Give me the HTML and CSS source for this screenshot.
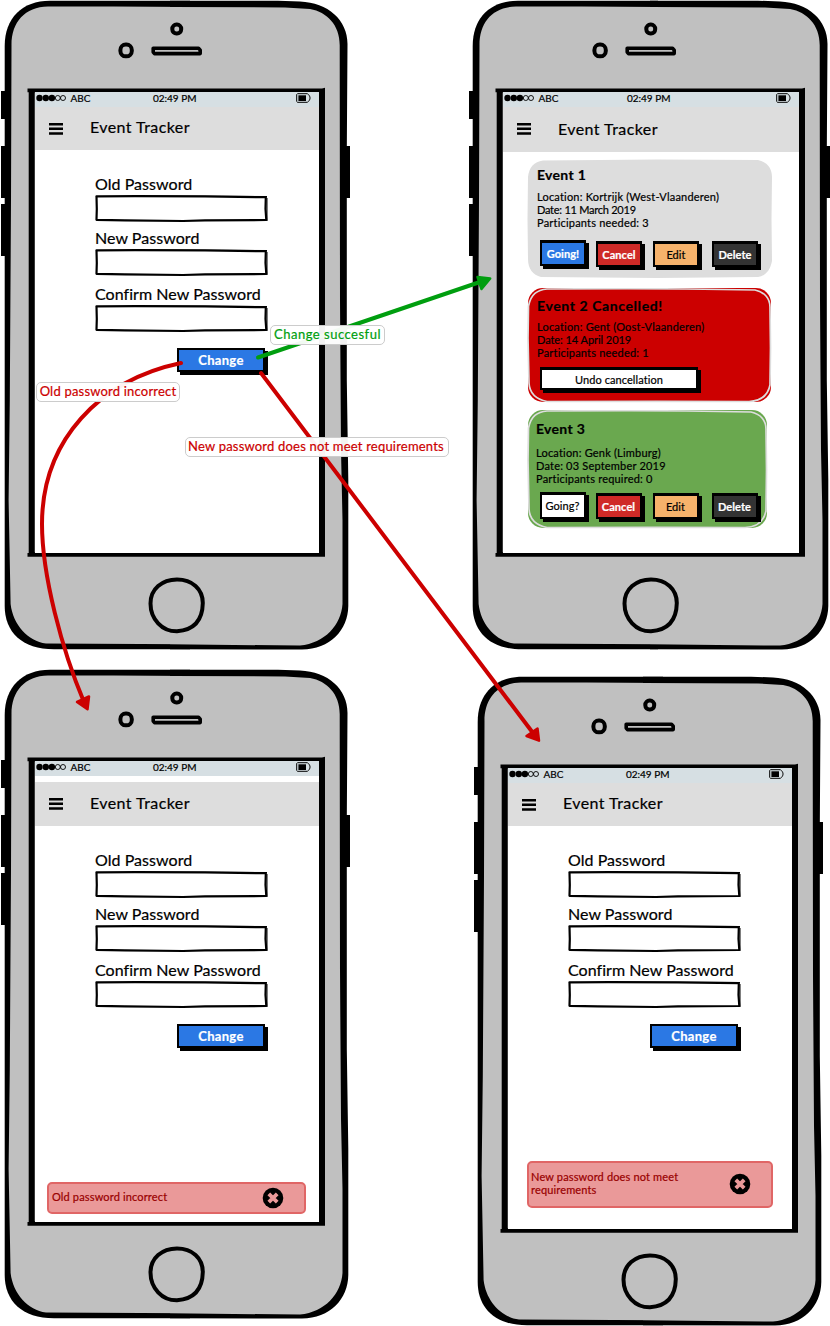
FILE: index.html
```html
<!DOCTYPE html>
<html lang="en">
<head>
<meta charset="utf-8">
<title>Event Tracker – change password flow</title>
<link rel="stylesheet" href="styles.css">
</head>
<body>
<svg class="defs" aria-hidden="true">
  <symbol id="frame-left" viewBox="0 0 190 650">
    <path d="M1 91h6v28H1zM1 146h6v52H1zM1 204h6v52H1z"/>
    <path d="M190 .7H50C22 .7 4.7 18 4.7 46V606C4.7 632 22 649.3 54 649.3H190Z"/>
    <path fill="#c0c0c0" d="M190 7L113 6.5H48C25 7 11.5 22 11.5 45L11 200 9.8 400 8.6 500 10.6 604C13 625 28 641 46 643.6L190 644.3Z"/>
    <path d="M190 92.5H34.7V552.3H190V556.7H27.5V553H28.7V92.3H27.5V88.5H190Z"/>
  </symbol>
  <symbol id="frame-right" viewBox="170 0 180 650">
    <path d="M345 146h5v52h-5z"/>
    <path d="M170 .7H278L300 1.5C328 2.500 347.500 20 347.500 44L346.800 150V380L348.300 480V606C348 630 330 649.500 302 649.500L170 649.300Z"/>
    <path fill="#c0c0c0" d="M170 7L285 7.500 310 9C327 12 339.700 25 339.700 45L340 300 341 450 342.500 520V604C341 625 325 643 300 645.600L170 644.200Z"/>
    <path d="M170 88.500H322L325 87.700V556.700H170V552.300H318.500V92.500H170Z"/>
  </symbol>
  <symbol id="frame-mid" viewBox="100 0 120 650">
    <g fill="none" stroke="#000">
      <rect x="172.300" y="24.600" width="8.900" height="8.900" rx="4.200" stroke-width="4"/>
      <rect x="120.400" y="44.500" width="11.400" height="11.800" rx="5.400" stroke-width="4"/>
      <path stroke-width="3.600" stroke-linejoin="round" d="M153.200 48.200H198.500L200.200 50.200V53.600H154.500L153.200 52Z"/>
      <path stroke-width="4" d="M177 579.500C192 579.500 202.800 589 202.800 603C202.500 620 194 630 177 631.300C162 631.500 150.500 619 150.500 603.500C150.500 589 162 579.500 177 579.500Z"/>
    </g>
  </symbol>
  <symbol id="signal" viewBox="0 0 30 8">
    <circle cx="3.500" cy="4" r="3.200"/><circle cx="9.800" cy="4" r="3.200"/><circle cx="15.900" cy="4" r="3.200"/>
    <g fill="none" stroke="#000" stroke-width=".9"><circle cx="21.800" cy="4" r="2.500"/><circle cx="27" cy="4" r="2.500"/></g>
  </symbol>
  <symbol id="battery" viewBox="0 0 15 10">
    <path fill="none" stroke="#000" d="M1.500.7H11.500L12.300 1.500C14.600 3.500 14.600 6.500 12.300 8.500L11.500 9.300H1.500L.7 8.500V1.500Z"/>
    <path d="M2.400 2.300H10V8H2.400Z"/>
  </symbol>
  <symbol id="burger" viewBox="0 0 14 12">
    <path d="M0 0h14v2.500H0zM0 4.600h14v2.500H0zM0 9.200h14v2.500H0z"/>
  </symbol>
  <symbol id="box" viewBox="0 0 173 28">
    <path fill="#fff" stroke="#000" stroke-width="2.200" stroke-linejoin="round" d="M1.500 1.500L40 1.100 110 1.300 170.800 2.200 170.500 14 171.300 25 110 25.400 88 26 30 25.300 1.500 24.800 1.800 14Z"/>
    <path fill="none" stroke="#000" d="M.7 1L172 1.500M172 3V26"/>
  </symbol>
  <symbol id="close" viewBox="0 0 22 22">
    <circle cx="11" cy="11" r="10.300"/>
    <path fill="none" stroke="#ea9999" stroke-width="3.800" d="M6.800 6.800L15.200 15.200M15.200 6.800L6.800 15.200"/>
  </symbol>
</svg>

<main class="board">
  <section class="phone phone-change">
    <div class="frame"><svg class="fl"><use href="#frame-left"/></svg><svg class="fr"><use href="#frame-right"/></svg><svg class="fm"><use href="#frame-mid"/></svg></div>
    <div class="screen">
      <div class="status"><svg class="signal"><use href="#signal"/></svg><span class="carrier">ABC</span><span class="time">02:49 PM</span><svg class="battery"><use href="#battery"/></svg></div>
      <header class="bar"><svg class="burger"><use href="#burger"/></svg><h1 class="title">Event Tracker</h1></header>
      <form class="form">
        <div class="field"><label>Old Password</label><svg class="box"><use href="#box"/></svg></div>
        <div class="field"><label>New Password</label><svg class="box"><use href="#box"/></svg></div>
        <div class="field last"><label>Confirm New Password</label><svg class="box"><use href="#box"/></svg></div>
        <span class="btn change blue">Change</span>
      </form>
    </div>
  </section>

  <section class="phone wide phone-events">
    <div class="frame"><svg class="fl"><use href="#frame-left"/></svg><svg class="fr"><use href="#frame-right"/></svg><svg class="fm"><use href="#frame-mid"/></svg></div>
    <div class="screen">
      <div class="status"><svg class="signal"><use href="#signal"/></svg><span class="carrier">ABC</span><span class="time">02:49 PM</span><svg class="battery"><use href="#battery"/></svg></div>
      <header class="bar"><svg class="burger"><use href="#burger"/></svg><h1 class="title">Event Tracker</h1></header>
      <div class="cards">
        <article class="card card-open">
          <svg class="card-bg" viewBox="0 0 246 120"><path fill="#ddd" d="M16 1.500L130 .5 231 1C240 3 245 9 245 18L244.500 60 245 102C243 112 238 117 231 118L130 119 14 118C6 116 1 110 1 100L.5 60 1 18C2 8 7 3 16 1.500Z"/></svg>
          <h2>Event 1</h2>
          <p><span>Location: Kortrijk (West-Vlaanderen)</span><span class="tight">Date: 11 March 2019</span><span>Participants needed: 3</span></p>
          <div class="actions"><span class="btn blue">Going!</span><span class="btn red">Cancel</span><span class="btn orange">Edit</span><span class="btn dark">Delete</span></div>
        </article>
        <article class="card card-cancelled">
          <svg class="card-bg" viewBox="0 0 246 120"><rect x="1" y="0" width="243" height="114" rx="15" fill="#c00"/><path fill="none" stroke="#ddd" stroke-width="1.700" d="M20 1L100 .6 160 1 228 2C238 4 243 11 243 19L243.500 60 243 97C241 107 234 113 222 113.500L130 113.300 20 113.500C8 111 2.500 105 2 95L1 50 1.500 18C4 6 10 2 20 1Z"/></svg>
          <h2>Event 2 Cancelled!</h2>
          <p><span>Location: Gent (Oost-Vlaanderen)</span><span class="plain">Date: 14 April 2019</span><span>Participants needed: 1</span></p>
          <div class="actions"><span class="btn white undo">Undo cancellation</span></div>
        </article>
        <article class="card card-full">
          <svg class="card-bg" viewBox="0 0 246 120"><rect x="1" y="0" width="239" height="118" rx="15" fill="#6aa84f"/><path fill="none" stroke="#ddd" stroke-width="1.700" d="M20 1L100 .6 160 1 224 2C234 4 239 11 239 19L239.500 60 239 101C237 111 230 117 218 117.500L130 117.300 20 117.500C8 115 2.500 109 2 99L1 50 1.500 18C4 6 10 2 20 1Z"/></svg>
          <h2>Event 3</h2>
          <p><span>Location: Genk (Limburg)</span><span>Date: 03 September 2019</span><span>Participants required: 0</span></p>
          <div class="actions"><span class="btn white">Going?</span><span class="btn red">Cancel</span><span class="btn orange">Edit</span><span class="btn dark">Delete</span></div>
        </article>
      </div>
    </div>
  </section>

  <section class="phone phone-old-error">
    <div class="frame"><svg class="fl"><use href="#frame-left"/></svg><svg class="fr"><use href="#frame-right"/></svg><svg class="fm"><use href="#frame-mid"/></svg></div>
    <div class="screen">
      <div class="status"><svg class="signal"><use href="#signal"/></svg><span class="carrier">ABC</span><span class="time">02:49 PM</span><svg class="battery"><use href="#battery"/></svg></div>
      <header class="bar"><svg class="burger"><use href="#burger"/></svg><h1 class="title">Event Tracker</h1></header>
      <form class="form">
        <div class="field"><label>Old Password</label><svg class="box"><use href="#box"/></svg></div>
        <div class="field"><label>New Password</label><svg class="box"><use href="#box"/></svg></div>
        <div class="field last"><label>Confirm New Password</label><svg class="box"><use href="#box"/></svg></div>
        <span class="btn change blue">Change</span>
      </form>
      <div class="alert"><span class="msg">Old password incorrect</span><svg class="close"><use href="#close"/></svg></div>
    </div>
  </section>

  <section class="phone phone-new-error">
    <div class="frame"><svg class="fl"><use href="#frame-left"/></svg><svg class="fr"><use href="#frame-right"/></svg><svg class="fm"><use href="#frame-mid"/></svg></div>
    <div class="screen">
      <div class="status"><svg class="signal"><use href="#signal"/></svg><span class="carrier">ABC</span><span class="time">02:49 PM</span><svg class="battery"><use href="#battery"/></svg></div>
      <header class="bar"><svg class="burger"><use href="#burger"/></svg><h1 class="title">Event Tracker</h1></header>
      <form class="form">
        <div class="field"><label>Old Password</label><svg class="box"><use href="#box"/></svg></div>
        <div class="field"><label>New Password</label><svg class="box"><use href="#box"/></svg></div>
        <div class="field last"><label>Confirm New Password</label><svg class="box"><use href="#box"/></svg></div>
        <span class="btn change blue">Change</span>
      </form>
      <div class="alert tall"><span class="msg">New password does not meet<br>requirements</span><svg class="close"><use href="#close"/></svg></div>
    </div>
  </section>

  <svg class="arrows" viewBox="0 0 830 1326">
    <g fill="none" stroke-width="4" stroke-linecap="round">
      <path stroke="#009e0f" d="M258 357.500L480 282"/>
      <path stroke="#c00" d="M181 363C100 380 42 440 42 524C42 575 62 650 84 702"/>
      <path stroke="#c00" d="M261 373L533 733"/>
    </g>
    <g stroke-width="2.500" stroke-linejoin="round">
      <path fill="#009e0f" stroke="#009e0f" d="M477.500 277L490.200 278.500 481.500 289Z"/>
      <path fill="#c00" stroke="#c00" d="M77 702L89 696.500 87.500 709.300Z"/>
      <path fill="#c00" stroke="#c00" d="M526.500 736L537.500 728.500 539 740.700Z"/>
    </g>
  </svg>
  <span class="tag tag-ok">Change succesful</span>
  <span class="tag tag-old">Old password incorrect</span>
  <span class="tag tag-new">New password does not meet requirements</span>
</main>
</body>
</html>
```
FILE: styles.css
```css
* { box-sizing: border-box; }
body { margin: 0; background: #fff; color: #000; font-family: Lato, "Open Sans", sans-serif; font-variant-ligatures: none; -webkit-text-stroke: .2px; }
svg { display: block; flex: none; }
.defs { position: absolute; width: 0; height: 0; }
.board { position: relative; width: 830px; height: 1326px; overflow: hidden; }

/* Phones sit freely on the board */
.phone { position: absolute; width: 350px; height: 650px; padding: 92px 31px 0 35px; }
.phone.wide { width: 362px; }
.phone-change { left: 0; top: 0; }
.phone-events { left: 468px; top: 0; }
.phone-old-error { left: 0; top: 669px; }
.phone-new-error { left: 473px; top: 676px; }

.frame { position: absolute; inset: 0; }
.frame svg { position: absolute; top: 0; height: 650px; }
.fl { left: 0; width: 190px; }
.fr { right: 0; width: 180px; }
.fm { left: 100px; width: 120px; }
.wide .fm { left: 106px; }

.screen { position: relative; display: flex; flex-direction: column; height: 461px; background: #fff; }
.status { display: flex; align-items: center; height: 15px; padding: 0 8px 3px 1px; background: #d6dfe3; font-size: 10px; line-height: 12px; }
.carrier, .time { margin-bottom: 1px; }
.signal { width: 30px; height: 8px; margin-right: 4.500px; }
.time { margin-left: 62.500px; }
.wide .time { margin-left: 68.500px; }
.battery { width: 15px; height: 10px; margin-left: auto; }

.bar { display: flex; height: 43px; padding: 10px 0 0 14px; background: #ddd; }
.burger { width: 14px; height: 12px; margin: 6px 27px 0 0; }
.title { margin: 0; font-size: 16px; font-weight: 400; line-height: 20px; letter-spacing: .42px; }
.wide .bar { height: 45px; }
.wide .title { margin-top: 2px; }
.phone-old-error .bar { margin-top: 6px; height: 44px; padding-top: 11px; }
.phone-old-error .burger { margin-top: 5px; }

.form { display: flex; flex-direction: column; gap: 6px; width: 234px; padding: 24px 0 0 60px; }
label { display: block; height: 21px; font-size: 16px; line-height: 20px; white-space: nowrap; letter-spacing: .05px; }
.box { width: 173px; height: 28px; margin-bottom: -1px; }
.field.last { margin-top: 2px; }

.btn { display: flex; align-items: center; justify-content: center; height: 26px; border: 2px solid #000; border-width: 3px 2px 2px; box-shadow: 3px 3px 0 #000; font-size: 11px; line-height: 13px; letter-spacing: .07px; white-space: nowrap; }
.blue { background: #2b78e4; color: #fff; font-weight: 700; }
.red { background: #cf2a27; color: #fff; font-weight: 700; }
.orange { background: #f6b26b; }
.dark { background: #333; color: #fff; font-weight: 700; }
.white { background: #fff; }
.change { align-self: flex-end; width: 88px; height: 24px; margin: 10px 4px 0 0; border-width: 2px; font-size: 13px; letter-spacing: .3px; }

.cards { display: flex; flex-direction: column; padding: 7px 0 0 24px; }
.card { position: relative; width: 246px; height: 129px; padding: 7px 0 0 10px; }
.card-bg { position: absolute; left: 0; top: 0; width: 246px; height: 120px; }
.card > :not(.card-bg) { position: relative; }
.card h2 { margin: 0; font-size: 14px; line-height: 18px; font-weight: 700; letter-spacing: .3px; }
.card p { display: flex; flex-direction: column; align-items: flex-start; margin: 6px 0 0; font-size: 11px; line-height: 13px; letter-spacing: .2px; white-space: nowrap; }
.card .tight { letter-spacing: -.25px; }
.card .plain { letter-spacing: -.06px; }
.actions { display: flex; margin: 11px 0 0 3px; }
.actions .btn { width: 46px; margin: 1px 11px 0 0; }
.actions .btn:first-child { margin: 0 10px 0 0; }
.actions .dark { margin-left: 2px; }
.card-cancelled { height: 122px; padding-top: 9px; }
.card-cancelled h2 { letter-spacing: .6px; }
.card-cancelled p { margin-top: 5px; }
.card-cancelled .actions { margin-top: 8px; }
.actions .undo { width: 158px; height: 23px; }
.card-full { padding: 10px 0 0 9px; }
.card-full p { margin-top: 8px; }
.card-full .actions { margin: 7px 0 0 3.500px; }
.card-full .white { height: 27px; padding-bottom: 1px; }

.alert { position: absolute; left: 12px; top: 421px; display: flex; align-items: center; justify-content: space-between; width: 259px; height: 32px; padding: 0 20px 0 3px; border: 2px solid #e06666; border-radius: 5px; background: #ea9999; color: #900; font-size: 11px; line-height: 13px; letter-spacing: .15px; }
.msg { margin-bottom: 4px; }
.alert.tall { left: 19px; top: 393px; width: 246px; height: 47px; padding: 0 20px 1px 2px; }
.tall .msg { margin-bottom: 2px; }
.close { width: 22px; height: 22px; }

.arrows { position: absolute; left: 0; top: 0; width: 830px; height: 1326px; }
.tag { position: absolute; display: flex; justify-content: center; align-items: center; height: 20px; padding-bottom: 2px; border: 1px solid #ccc; border-radius: 5px; background: rgba(255,255,255,.95); color: #c00; font-size: 13px; letter-spacing: .2px; white-space: nowrap; }
.tag-ok { left: 270px; top: 325px; width: 115px; color: #009e0f; letter-spacing: .5px; }
.tag-old { left: 36px; top: 382px; width: 144px; }
.tag-new { left: 185px; top: 437px; width: 264px; padding-right: 2px; }
```
